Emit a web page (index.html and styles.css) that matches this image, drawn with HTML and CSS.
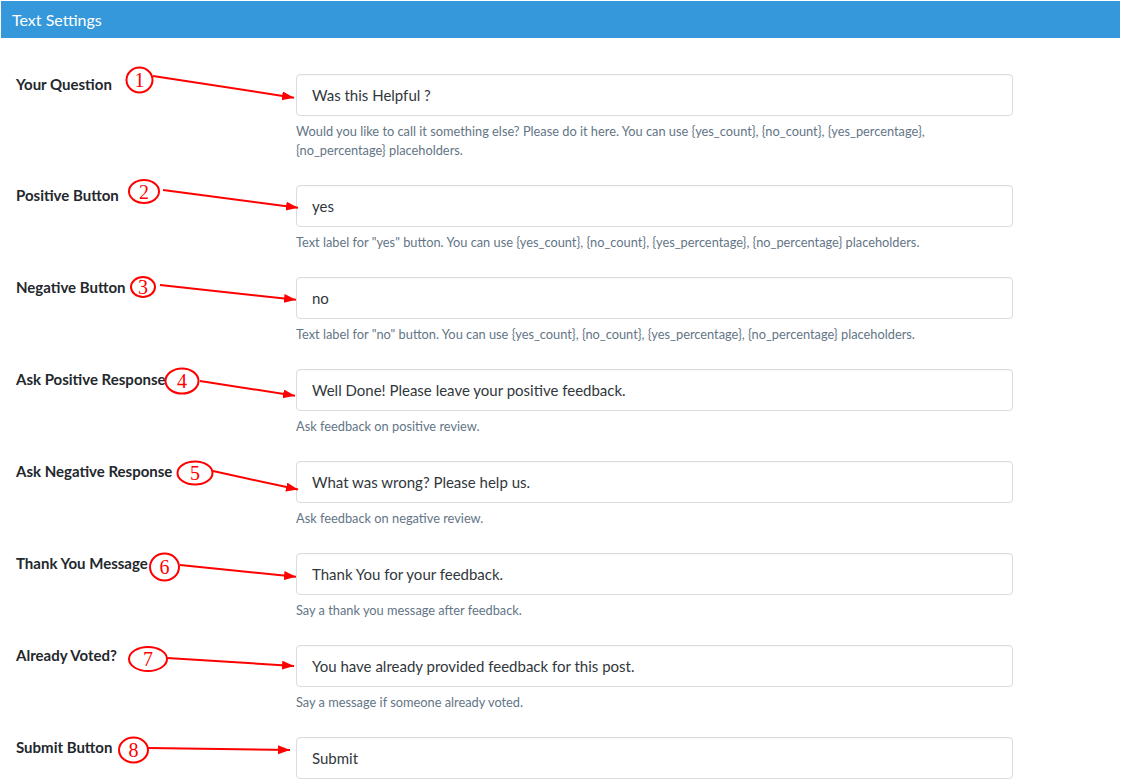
FILE: index.html
```html
<!DOCTYPE html>
<html>
<head>
<meta charset="utf-8">
<link rel="stylesheet" href="styles.css">
</head>
<body>
<div class="panel">
  <div class="panel-head">Text Settings</div>
  <div class="form">
    <div class="row">
      <div class="label">Your Question</div>
      <div class="field">
        <div class="input">Was this Helpful ?</div>
        <p class="help">Would you like to call it something else? Please do it here. You can use {yes_count}, {no_count}, {yes_percentage}, {no_percentage} placeholders.</p>
      </div>
    </div>
    <div class="row">
      <div class="label">Positive Button</div>
      <div class="field">
        <div class="input">yes</div>
        <p class="help">Text label for "yes" button. You can use {yes_count}, {no_count}, {yes_percentage}, {no_percentage} placeholders.</p>
      </div>
    </div>
    <div class="row">
      <div class="label">Negative Button</div>
      <div class="field">
        <div class="input">no</div>
        <p class="help">Text label for "no" button. You can use {yes_count}, {no_count}, {yes_percentage}, {no_percentage} placeholders.</p>
      </div>
    </div>
    <div class="row">
      <div class="label">Ask Positive Response</div>
      <div class="field">
        <div class="input">Well Done! Please leave your positive feedback.</div>
        <p class="help">Ask feedback on positive review.</p>
      </div>
    </div>
    <div class="row">
      <div class="label">Ask Negative Response</div>
      <div class="field">
        <div class="input">What was wrong? Please help us.</div>
        <p class="help">Ask feedback on negative review.</p>
      </div>
    </div>
    <div class="row">
      <div class="label">Thank You Message</div>
      <div class="field">
        <div class="input">Thank You for your feedback.</div>
        <p class="help">Say a thank you message after feedback.</p>
      </div>
    </div>
    <div class="row">
      <div class="label">Already Voted?</div>
      <div class="field">
        <div class="input">You have already provided feedback for this post.</div>
        <p class="help">Say a message if someone already voted.</p>
      </div>
    </div>
    <div class="row">
      <div class="label">Submit Button</div>
      <div class="field">
        <div class="input">Submit</div>
      </div>
    </div>
  </div>
</div>

<svg class="notes" width="1121" height="783" viewBox="0 0 1121 783" xmlns="http://www.w3.org/2000/svg">
  <defs>
    <marker id="ah" markerUnits="userSpaceOnUse" markerWidth="14" markerHeight="10" refX="12" refY="4.5" orient="auto">
      <path d="M0,0 L12,4.5 L0,9 Z" fill="#f00"/>
    </marker>
  </defs>
  <g class="arrows" stroke="#f00" stroke-width="2" fill="none">
    <line x1="153" y1="76" x2="294" y2="97.7" marker-end="url(#ah)"/>
    <line x1="163" y1="190" x2="298" y2="207.7" marker-end="url(#ah)"/>
    <line x1="160" y1="285" x2="296" y2="299.8" marker-end="url(#ah)"/>
    <line x1="200" y1="381" x2="295" y2="395.7" marker-end="url(#ah)"/>
    <line x1="213" y1="471" x2="298" y2="489.6" marker-end="url(#ah)"/>
    <line x1="180" y1="565" x2="296" y2="576.8" marker-end="url(#ah)"/>
    <line x1="167" y1="658" x2="294" y2="665.9" marker-end="url(#ah)"/>
    <line x1="148" y1="748" x2="290" y2="750" marker-end="url(#ah)"/>
    <ellipse cx="139.5" cy="80" rx="13" ry="12.5"/>
    <ellipse cx="144" cy="191.5" rx="15" ry="11.5"/>
    <ellipse cx="143" cy="287" rx="12" ry="10"/>
    <ellipse cx="182" cy="381" rx="16.5" ry="12.5"/>
    <ellipse cx="195" cy="473" rx="17.5" ry="11.5"/>
    <ellipse cx="164.5" cy="567" rx="14.5" ry="13.5"/>
    <ellipse cx="148" cy="659" rx="19" ry="12"/>
    <ellipse cx="133.5" cy="750" rx="14.5" ry="12.5"/>
  </g>
  <g class="nums">
    <text x="139.5" y="80">1</text>
    <text x="144" y="191.5">2</text>
    <text x="143" y="287">3</text>
    <text x="182" y="381">4</text>
    <text x="195" y="473">5</text>
    <text x="164.5" y="567">6</text>
    <text x="148" y="659">7</text>
    <text x="133.5" y="750">8</text>
  </g>
</svg>
</body>
</html>
```
FILE: styles.css
```css
html, body {
  margin: 0;
  padding: 0;
  background: #fff;
}
body {
  position: relative;
  font-family: Lato, "Open Sans", "Liberation Sans", sans-serif;
  color: #23282d;
}
.panel {
  margin: 1px 1px 0 1px;
}
.panel-head {
  background: #3498db;
  color: #fff;
  height: 37px;
  line-height: 37px;
  padding-left: 11px;
  font-size: 16px;
}
.form {
  padding: 36px 0 0 15px;
}
.row {
  display: grid;
  grid-template-columns: 280px 717px;
  margin-bottom: 25px;
}
.label {
  font-weight: 700;
  font-size: 15px;
  line-height: 20px;
  color: #23282d;
  white-space: nowrap;
}
.field {
  display: flex;
  flex-direction: column;
}
.input {
  box-sizing: border-box;
  height: 42px;
  border: 1px solid #dcdcde;
  border-radius: 4px;
  padding: 0 15px;
  line-height: 40px;
  font-size: 15px;
  color: #32373c;
  box-shadow: inset 0 1px 1px rgba(0,0,0,0.03);
}
.help {
  margin: 6px 0 0 0;
  font-size: 12.8px;
  line-height: 19px;
  color: #637586;
}
.notes {
  position: absolute;
  left: 0;
  top: 0;
  pointer-events: none;
}
.nums text {
  font-family: "Liberation Serif", "DejaVu Serif", serif;
  font-size: 20px;
  fill: #f00;
  text-anchor: middle;
  dominant-baseline: central;
}
```
